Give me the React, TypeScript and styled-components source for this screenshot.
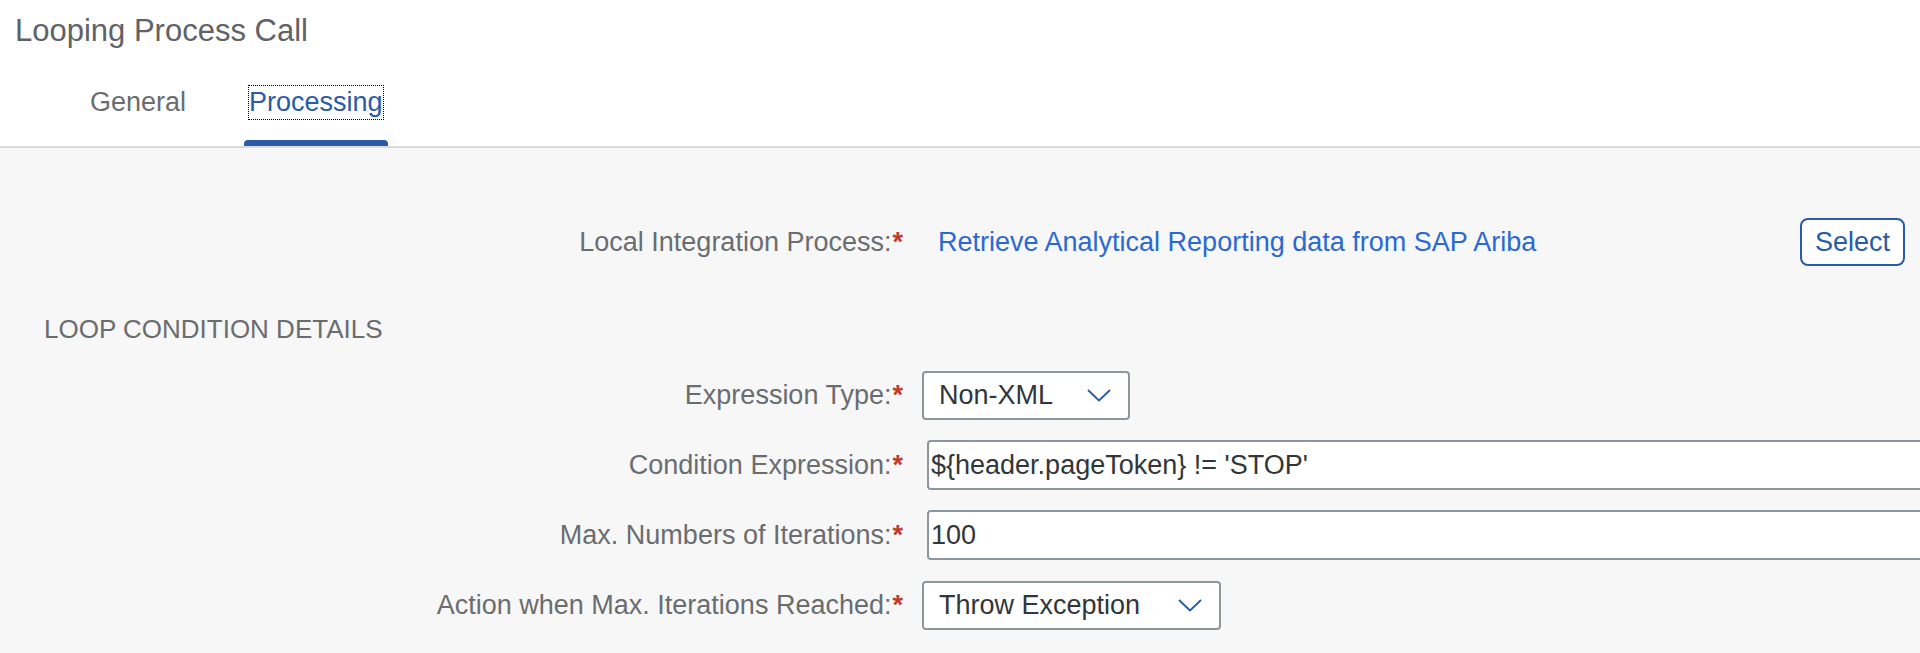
import styled, { createGlobalStyle } from "styled-components";

const COLOR_BACKGROUND = "#f7f7f7";
const COLOR_HEADER = "#ffffff";
const COLOR_TITLE = "#5f6266";
const COLOR_LABEL = "#6a6d70";
const COLOR_TEXT = "#32363a";
const COLOR_LINK = "#2a6ad0";
const COLOR_BRAND = "#2a5ba6";
const COLOR_REQUIRED = "#c0392b";
const COLOR_FIELD_BORDER = "#8f959c";
const FONT = `"Liberation Sans", Arial, sans-serif`;

const GlobalStyle = createGlobalStyle`
  html, body {
    margin: 0;
    padding: 0;
  }
  body {
    font-family: ${FONT};
    background-color: ${COLOR_BACKGROUND};
    overflow: hidden;
  }
`;

const Page = styled.div`
  min-height: 100vh;
  overflow: hidden;
  background-color: ${COLOR_BACKGROUND};
`;

const Header = styled.header`
  background-color: ${COLOR_HEADER};
  border-bottom: 2px solid #d9dadb;
`;

const Title = styled.h1`
  margin: 0;
  padding: 11px 15px 9px;
  font-size: 31px;
  line-height: 40px;
  font-weight: normal;
  color: ${COLOR_TITLE};
`;

const TabBar = styled.nav`
  display: flex;
  gap: 53px;
  height: 86px;
  padding-left: 85px;
`;

const Tab = styled.div`
  display: flex;
  flex-direction: column;
  padding-top: 26px;
  cursor: pointer;
`;

const TabLabel = styled.span<{ $active?: boolean }>`
  margin: 0 5px;
  font-size: 27px;
  line-height: 33px;
  white-space: nowrap;
  color: ${(p) => (p.$active ? COLOR_BRAND : COLOR_LABEL)};
  outline: ${(p) => (p.$active ? "1px dotted #000" : "none")};
`;

const TabIndicator = styled.div<{ $active?: boolean }>`
  margin-top: auto;
  height: 6px;
  border-radius: 4px 4px 0 0;
  background-color: ${(p) => (p.$active ? COLOR_BRAND : "transparent")};
`;

const Content = styled.main`
  padding-top: 70px;
`;

const LinkRow = styled.div`
  display: grid;
  grid-template-columns: 903px 1fr auto;
  align-items: center;
  height: 48px;
  padding-right: 15px;
`;

const FieldLabel = styled.label`
  text-align: right;
  font-size: 27px;
  line-height: 33px;
  white-space: nowrap;
  color: ${COLOR_LABEL};
`;

const Required = styled.span`
  margin-left: 1px;
  font-weight: bold;
  color: ${COLOR_REQUIRED};
`;

const Link = styled.a`
  padding-left: 35px;
  font-size: 27px;
  color: ${COLOR_LINK};
  text-decoration: none;
  white-space: nowrap;
`;

const SelectButton = styled.button`
  box-sizing: border-box;
  width: 105px;
  height: 48px;
  padding: 0;
  border: 2px solid ${COLOR_BRAND};
  border-radius: 8px;
  background-color: #fff;
  color: ${COLOR_BRAND};
  font-family: ${FONT};
  font-size: 27px;
`;

const SectionTitle = styled.h2`
  margin: 47px 0 15px 44px;
  font-size: 26px;
  line-height: 32px;
  font-weight: normal;
  color: ${COLOR_LABEL};
`;

const Form = styled.div`
  display: grid;
  grid-template-columns: 903px 1fr;
  grid-auto-rows: 70px;
  column-gap: 19px;
  align-items: center;
`;

const Select = styled.div<{ $width: number }>`
  box-sizing: border-box;
  display: flex;
  align-items: center;
  justify-content: space-between;
  width: ${(p) => p.$width}px;
  height: 49px;
  padding: 0 17px 0 15px;
  border: 2px solid ${COLOR_FIELD_BORDER};
  border-radius: 4px;
  background-color: #fff;
  font-size: 27px;
  color: ${COLOR_TEXT};
  white-space: nowrap;
`;

const TextInput = styled.input`
  box-sizing: border-box;
  width: calc(100% + 40px);
  height: 50px;
  margin-left: 5px;
  padding: 0 2px;
  border: 2px solid ${COLOR_FIELD_BORDER};
  border-radius: 4px;
  background-color: #fff;
  font-family: ${FONT};
  font-size: 27px;
  color: ${COLOR_TEXT};
  outline: none;
`;

const Chevron = () => (
  <svg width="24" height="13" viewBox="0 0 24 13" fill="none">
    <polyline
      points="1,1 12,11.5 23,1"
      stroke={COLOR_BRAND}
      strokeWidth="1.8"
      strokeLinejoin="round"
    />
  </svg>
);

const Label = ({ text }: { text: string }) => (
  <FieldLabel>
    {text}:<Required>*</Required>
  </FieldLabel>
);

export default function App() {
  return (
    <Page>
      <GlobalStyle />
      <Header>
        <Title>Looping Process Call</Title>
        <TabBar>
          <Tab>
            <TabLabel>General</TabLabel>
            <TabIndicator />
          </Tab>
          <Tab>
            <TabLabel $active>Processing</TabLabel>
            <TabIndicator $active />
          </Tab>
        </TabBar>
      </Header>
      <Content>
        <LinkRow>
          <Label text="Local Integration Process" />
          <Link href="#">Retrieve Analytical Reporting data from SAP Ariba</Link>
          <SelectButton>Select</SelectButton>
        </LinkRow>
        <SectionTitle>LOOP CONDITION DETAILS</SectionTitle>
        <Form>
          <Label text="Expression Type" />
          <Select $width={208}>
            Non-XML
            <Chevron />
          </Select>
          <Label text="Condition Expression" />
          <TextInput defaultValue="${header.pageToken} != 'STOP'" />
          <Label text="Max. Numbers of Iterations" />
          <TextInput defaultValue="100" />
          <Label text="Action when Max. Iterations Reached" />
          <Select $width={299}>
            Throw Exception
            <Chevron />
          </Select>
        </Form>
      </Content>
    </Page>
  );
}
